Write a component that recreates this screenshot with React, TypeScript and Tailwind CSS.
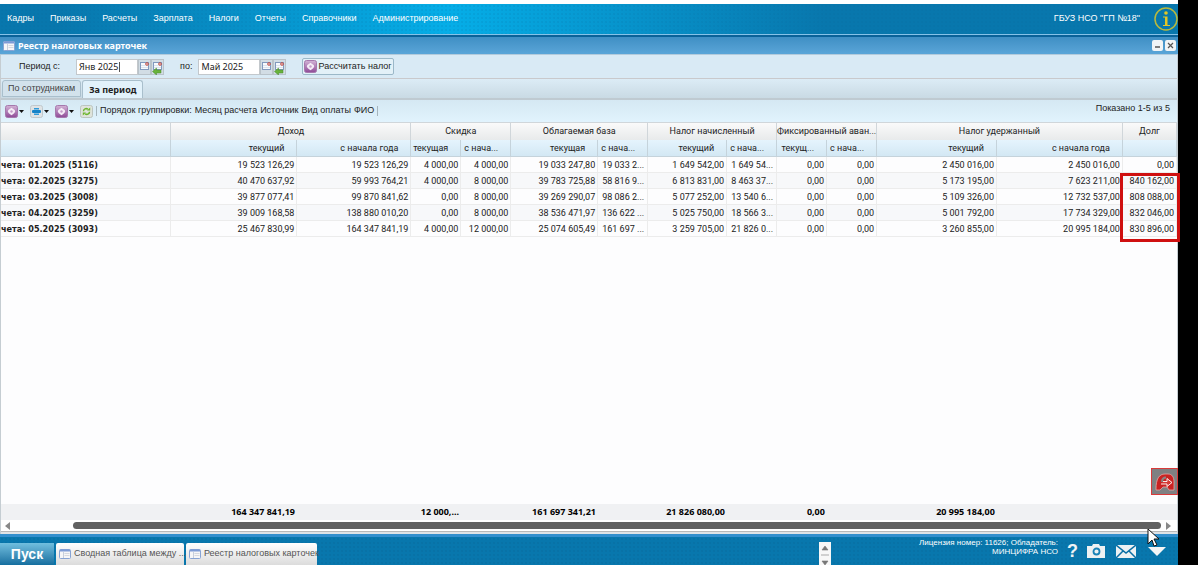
import { Fragment } from 'react';

const menu = ['Кадры', 'Приказы', 'Расчеты', 'Зарплата', 'Налоги', 'Отчеты', 'Справочники', 'Администрирование'];

const columns = [170, 126, 114, 50, 50, 87, 50, 79, 50, 50, 50, 120, 126, 54];

const groups = [
  { title: 'Доход', span: 2 },
  { title: 'Скидка', span: 2 },
  { title: 'Облагаемая база', span: 2 },
  { title: 'Налог начисленный', span: 2 },
  { title: 'Фиксированный аван...', span: 2 },
  { title: 'Налог удержанный', span: 2 },
  { title: 'Долг', span: 1 },
];

const subHeads = [
  'текущий', 'с начала года', 'текущая', 'с нача...', 'текущая', 'с нача...', 'текущий',
  'с нача...', 'текущ...', 'с нача...', 'текущий', 'с начала года', '',
];

const rows = [
  ['чета: 01.2025 (5116)', '19 523 126,29', '19 523 126,29', '4 000,00', '4 000,00', '19 033 247,80', '19 033 2...', '1 649 542,00', '1 649 54...', '0,00', '0,00', '2 450 016,00', '2 450 016,00', '0,00'],
  ['чета: 02.2025 (3275)', '40 470 637,92', '59 993 764,21', '4 000,00', '8 000,00', '39 783 725,88', '58 816 9...', '6 813 831,00', '8 463 37...', '0,00', '0,00', '5 173 195,00', '7 623 211,00', '840 162,00'],
  ['чета: 03.2025 (3008)', '39 877 077,41', '99 870 841,62', '0,00', '8 000,00', '39 269 290,07', '98 086 2...', '5 077 252,00', '13 540 6...', '0,00', '0,00', '5 109 326,00', '12 732 537,00', '808 088,00'],
  ['чета: 04.2025 (3259)', '39 009 168,58', '138 880 010,20', '0,00', '8 000,00', '38 536 471,97', '136 622 ...', '5 025 750,00', '18 566 3...', '0,00', '0,00', '5 001 792,00', '17 734 329,00', '832 046,00'],
  ['чета: 05.2025 (3093)', '25 467 830,99', '164 347 841,19', '4 000,00', '12 000,00', '25 074 605,49', '161 697 ...', '3 259 705,00', '21 826 0...', '0,00', '0,00', '3 260 855,00', '20 995 184,00', '830 896,00'],
];

const totals = ['', '164 347 841,19', '', '12 000,...', '', '161 697 341,21', '', '21 826 080,00', '', '0,00', '', '20 995 184,00', '', ''];

function Cols() {
  return (
    <colgroup>
      {columns.map((w, i) => (
        <col key={i} style={{ width: `${(w / 1176) * 100}%` }} />
      ))}
    </colgroup>
  );
}

function GearIcon() {
  return (
    <svg viewBox="0 0 13 13" className="size-[13px] shrink-0">
      <defs>
        <linearGradient id="gear" x2="0" y2="1">
          <stop offset="0" stopColor="#d3b4d6" />
          <stop offset="1" stopColor="#8e4a97" />
        </linearGradient>
      </defs>
      <rect x=".5" y=".5" width="12" height="12" rx="2" fill="url(#gear)" stroke="#a678ad" />
      <path d="m6.500 2.800 1.400 1 1.800 1.200.500 1.500-.800 1.500-1.500 1.200-1.400 1-1.400-1-1.500-1.200-.800-1.500.500-1.500 1.800-1.200z" fill="#f4ebf6" />
      <circle cx="6.500" cy="6.500" r="1.200" fill="#c49bca" />
    </svg>
  );
}

function PrintIcon() {
  return (
    <svg viewBox="0 0 13 13" className="size-[13px] shrink-0">
      <rect x=".5" y=".5" width="12" height="12" rx="2" fill="#dfe3e5" stroke="#c0c8cc" />
      <path d="M4 3h5v1.500H4zM4 8.500h5V10H4z" fill="#2f9ada" />
      <rect x="2" y="5" width="9" height="3" rx="1" fill="#1683c8" />
    </svg>
  );
}

function RefreshIcon() {
  return (
    <svg viewBox="0 0 13 13" className="size-[13px] shrink-0">
      <rect x=".5" y=".5" width="12" height="12" rx="2" fill="#dfe3dc" stroke="#bcc5bf" />
      <path d="M3.500 6.200C3.500 3.800 6 3 8 4.200M9.500 6.800C9.500 9.200 7 10 5 8.800" fill="none" stroke="#6db52e" strokeWidth="1.500" />
      <path d="M7 5.500h3.200V2.500zM6 7.500H2.800v3z" fill="#6db52e" />
    </svg>
  );
}

function CalendarIcon({ back }: { back?: boolean }) {
  return (
    <svg viewBox="0 0 13 16" className="h-4 w-[13px] shrink-0">
      <rect x=".5" y=".5" width="12" height="15" fill="#d2dde5" stroke="#b9c3ca" />
      <rect x="2.500" y="3.500" width="8" height="7" fill="#f7fafd" stroke="#8199bd" />
      <path d="M3 6.500h5M3 8.500h7" stroke="#dbe3ee" />
      <circle cx="9" cy="5" r="1.300" fill="#fff" stroke="#bd3f37" />
      {back && <path d="M1.500 12.500 5.500 9v2H10v3H5.500v2z" fill="#69b33c" stroke="#44882a" strokeWidth=".5" />}
    </svg>
  );
}

function WindowIcon() {
  return (
    <svg viewBox="0 0 12 10" className="h-[10px] w-3 shrink-0">
      <rect x=".5" y=".5" width="11" height="9" rx="1" fill="#f5f6f8" stroke="#86a3d4" />
      <path d="M1 1.500h10" stroke="#7c9bd6" strokeWidth="2" />
      <path d="M4.500 3v6" stroke="#c5cedc" />
      <path d="M5.500 4.500h5M5.500 6.500h5" stroke="#d5d8de" />
    </svg>
  );
}

function Caret() {
  return (
    <svg viewBox="0 0 5 3" className="h-[3px] w-[5px]">
      <path d="M0 0h5L2.500 3z" fill="#111" />
    </svg>
  );
}

function MonthField({ id, value, active }: { id: string; value: string; active?: boolean }) {
  return (
    <div className="relative flex items-center">
      <input
        id={id}
        defaultValue={value}
        className="h-4 w-[62px] border border-[#c3c8cc] bg-white px-[2px] font-['Noto_Sans',sans-serif] text-[9px] leading-[14px] text-[#222] outline-none"
      />
      {active && <span className="absolute top-[3px] left-[43px] h-[10px] w-px bg-[#555]" />}
      <button type="button" aria-label="Календарь"><CalendarIcon /></button>
      <button type="button" aria-label="Сбросить месяц"><CalendarIcon back /></button>
    </div>
  );
}

export default function App() {
  return (
    <div className="flex min-h-screen overflow-hidden bg-black font-['Liberation_Sans',Arial,sans-serif] text-[9px] text-[#222]">
      <div className="flex min-w-0 flex-1 flex-col bg-white pt-1">
        <header className="bg-linear-to-r from-[#0877ad] from-5% via-[#05aee8] via-38% to-[#0877ad] to-70%">
          <div className="flex h-[30px] items-center bg-[radial-gradient(#0a669820_1px,transparent_1px)] bg-[length:4px_4px] pl-[7px] text-white">
            <nav className="flex gap-4">
              {menu.map((item) => (
                <a key={item} href="#" className="whitespace-nowrap">{item}</a>
              ))}
            </nav>
            <span className="ml-auto">ГБУЗ НСО "ГП №18"</span>
            <svg viewBox="0 0 24 24" className="ml-[14px] size-6">
              <circle cx="12" cy="12" r="11" fill="none" stroke="#b9b93d" strokeWidth="1.500" />
              <circle cx="12" cy="6" r="1.800" fill="#e3c624" />
              <path d="M9 9.500h4.500V18H16v1H9v-1h2v-7.500H9z" fill="#e3c624" />
            </svg>
          </div>
        </header>
        <div className="h-[3px] border-t border-[#85c2e8] bg-[#0a6299]" />

        <div className="flex h-[18px] items-center border-b border-[#b3cbdc] bg-linear-to-b from-[#3f8fc4] to-[#5aa5d8] pr-[2px] pl-[3px]">
          <WindowIcon />
          <h1 className="ml-[3px] font-['Noto_Sans',sans-serif] font-bold text-white">Реестр налоговых карточек</h1>
          <div className="ml-auto flex gap-[2px]">
            <button type="button" aria-label="Свернуть" className="flex size-[11px] items-center justify-center rounded-[2px] bg-[#f1f4f6]">
              <svg viewBox="0 0 11 11" className="size-[11px]"><path d="M3 7h5" stroke="#555" strokeWidth="1.500" /></svg>
            </button>
            <button type="button" aria-label="Закрыть" className="flex size-[11px] items-center justify-center rounded-[2px] bg-[#f1f4f6]">
              <svg viewBox="0 0 11 11" className="size-[11px]"><path d="m3 3 5 5M8 3 3 8" stroke="#555" strokeWidth="1.200" /></svg>
            </button>
          </div>
        </div>

        <div className="flex min-h-0 flex-1 flex-col border-r border-l border-[#c5cdd2]">
          <div className="flex h-6 items-center border-b border-[#c9c9cc] bg-[#d9eaf5] pl-[18px]">
            <label htmlFor="from" className="mr-4">Период с:</label>
            <MonthField id="from" value="Янв 2025" active />
            <label htmlFor="to" className="mr-[6px] ml-4">по:</label>
            <MonthField id="to" value="Май 2025" />
            <button type="button" className="ml-4 flex h-[17px] items-center gap-px rounded-[2px] border border-[#9bb8c8] bg-[#e3f1f8] px-px whitespace-nowrap">
              <GearIcon />
              Рассчитать налог
            </button>
          </div>

          <div className="flex h-[21px] items-start gap-px border-b-2 border-[#bfcad1] bg-linear-to-b from-[#dcecf6] to-[#c9dae4] pt-px pl-px">
            <button type="button" className="h-[17px] rounded-t-[3px] border border-[#a9bfcc] bg-[#d2e2ec] px-[5px] text-[#444]">По сотрудникам</button>
            <button type="button" className="h-[18px] rounded-t-[3px] border border-b-0 border-[#a9bfcc] bg-[#e2f2fb] px-[6px] font-['Noto_Sans',sans-serif] font-bold">За период</button>
          </div>

          <div className="flex h-[22px] items-center bg-linear-to-b from-[#d5e8f3] to-[#e1f3fd] pr-[7px] pl-1">
            <div className="flex gap-[6px]">
              <button type="button" aria-label="Действия" className="flex items-center gap-px"><GearIcon /><Caret /></button>
              <button type="button" aria-label="Печать" className="flex items-center gap-px"><PrintIcon /><Caret /></button>
              <button type="button" aria-label="Операции" className="flex items-center gap-px"><GearIcon /><Caret /></button>
              <button type="button" aria-label="Обновить"><RefreshIcon /></button>
            </div>
            <div className="mx-[3px] h-[10px] w-px bg-[#a5b5bd]" />
            <span className="mr-[3px] whitespace-nowrap">Порядок группировки:</span>
            <div className="flex gap-[3px] whitespace-nowrap">
              <button type="button">Месяц расчета</button>
              <button type="button">Источник</button>
              <button type="button">Вид оплаты</button>
              <button type="button">ФИО</button>
            </div>
            <div className="ml-[3px] h-[10px] w-px bg-[#a5b5bd]" />
            <span className="ml-auto pb-1 whitespace-nowrap">Показано 1-5 из 5</span>
          </div>

          <main className="relative flex-1 bg-[#fdfdfe] font-['Roboto',sans-serif]">
            <table className="w-full table-fixed border-collapse leading-[14px]">
              <Cols />
              <thead>
                <tr className="h-[17px] bg-linear-to-b from-[#fafafa] to-[#e8eaeb]">
                  <th className="border-t border-r border-[#d0d6da]" />
                  {groups.map((g) => (
                    <th key={g.title} colSpan={g.span} className="border-t border-r border-[#d0d6da] p-0 font-normal whitespace-nowrap">{g.title}</th>
                  ))}
                </tr>
                <tr className="h-[17px] bg-linear-to-b from-[#e5f4fd] to-[#d2e7f3]">
                  <th className="border-r border-b border-[#c5d3db]" />
                  {subHeads.map((h, i) => (
                    <th key={i} className="border-r border-b border-[#c5d3db] p-0 pr-3 text-right font-normal whitespace-nowrap">{h}</th>
                  ))}
                </tr>
              </thead>
              <tbody>
                {rows.map((row) => (
                  <tr key={row[0]} className="h-4 border-b border-[#ececec] even:bg-[#f7f8fa]">
                    {row.map((cell, i) => (
                      <Fragment key={i}>
                        {i === 0 ? (
                          <th scope="row" className="border-r border-[#ececec] p-0 text-left font-['DejaVu_Sans_Condensed','DejaVu_Sans',sans-serif] font-bold whitespace-nowrap">{cell}</th>
                        ) : (
                          <td className={`border-r border-[#ececec] p-0 whitespace-nowrap ${cell.endsWith('...') ? 'pl-1 text-left' : 'pr-[2px] text-right'}`}>{cell}</td>
                        )}
                      </Fragment>
                    ))}
                  </tr>
                ))}
              </tbody>
            </table>
            <div className="absolute top-[51px] -right-[3px] h-[69px] w-[60px] border-3 border-[#cf1010]" />
            <div className="absolute -right-px bottom-[9px] flex size-[27px] items-center justify-center border border-[#d93a3a] bg-[#7f8082]">
              <svg viewBox="0 0 22 22" className="size-[22px]">
                <path d="M2 18C2 8 5 3 11 3h3c4 0 6 3 6 8v8h-5l-2-3H9l-3 3H2z" fill="#c92323" stroke="#e8a5a5" strokeWidth=".8" />
                <path d="M8 11c0-3 1-4.500 4-4.500" fill="none" stroke="#8a8585" strokeWidth="2" />
                <path d="M9 10.500h4V7.500l5 4-5 4V13H7" fill="#d63a36" stroke="#fff" strokeWidth=".9" />
              </svg>
            </div>
          </main>

          <table className="w-full table-fixed border-collapse bg-[#f0f1f3] font-['Noto_Sans',sans-serif] leading-[14px] font-bold text-black">
            <Cols />
            <tbody>
              <tr className="h-4">
                {totals.map((t, i) => (
                  <td key={i} className="p-0 pr-[2px] text-right whitespace-nowrap">{t}</td>
                ))}
              </tr>
            </tbody>
          </table>
          <div className="flex h-[11px] items-center bg-white px-1">
            <svg viewBox="0 0 5 8" className="h-2 w-[5px]"><path d="M5 0v8L0 4z" fill="#888" /></svg>
            <div className="mr-[5px] ml-[63px] h-[7px] flex-1 rounded-full bg-[#616161]" />
            <svg viewBox="0 0 5 8" className="mr-[2px] h-2 w-[5px]"><path d="M0 0v8l5-4z" fill="#888" /></svg>
          </div>
          <div className="h-[3px] border-t border-[#b8b8b8] bg-[#dfe3e6]" />
        </div>

        <footer className="bg-[#0877ad]">
          <div className="h-[3px] bg-[#338fcd]" />
          <div className="flex h-7 items-end bg-[radial-gradient(#0a669850_1px,transparent_1px)] bg-[length:4px_4px]">
            <button type="button" className="h-[22px] w-[54px] bg-linear-to-b from-[#70bfdf] to-[#136f9f] text-[14px] font-bold text-white">Пуск</button>
            <button type="button" className="ml-[2px] flex h-[22px] w-32 items-center gap-[3px] rounded-t-[2px] bg-linear-to-b from-white to-[#dcdcdc] px-[3px] whitespace-nowrap text-[#555]"><WindowIcon />Сводная таблица между ...</button>
            <button type="button" className="ml-[2px] flex h-[22px] w-[131px] items-center gap-[3px] rounded-t-[2px] bg-linear-to-b from-white to-[#dcdcdc] px-[3px] whitespace-nowrap text-[#555]"><WindowIcon />Реестр налоговых карточек</button>
            <div className="ml-auto flex h-[23px] w-3 justify-center bg-[#f7f7f7]">
              <svg viewBox="0 0 12 23" className="h-[23px] w-3"><path d="M3 8h6L6 4zM3 19h6l-3 4zM2 13h8" fill="#777" stroke="#777" strokeWidth=".6" /></svg>
            </div>
            <p className="ml-[88px] self-start pt-px text-right text-[8px] leading-[9px] text-white">Лицензия номер: 11626; Обладатель:<br />МИНЦИФРА НСО</p>
            <div className="mr-3 ml-[9px] flex h-7 items-center gap-2">
              <button type="button" aria-label="Справка" className="w-[11px] text-[18px] leading-5 font-bold text-[#eef3f5]">?</button>
              <svg viewBox="0 0 20 14" className="h-[14px] w-5"><path d="M1 2h5l1-2h6l1 2h5v12H1z" fill="#edf1f3" /><circle cx="10.500" cy="7.500" r="3" fill="none" stroke="#1982b7" strokeWidth="1.800" /></svg>
              <svg viewBox="0 0 20 13" className="ml-[2px] h-[13px] w-5"><path d="M0 0h20v13H0z" fill="#edf1f3" /><path d="m0 0 10 8 10-8M0 13l7-7M20 13l-7-7" fill="none" stroke="#0b6fa5" strokeWidth="1.500" /></svg>
              <svg viewBox="0 0 18 9" className="ml-1 h-[9px] w-[18px]"><path d="M0 0h18L9 9z" fill="#f2f5f6" /></svg>
            </div>
          </div>
        </footer>
      </div>
      <div className="w-5 shrink-0 bg-black" />
      <svg viewBox="0 0 12 19" className="absolute right-[39px] bottom-[18px] h-[19px] w-3">
        <path d="M1 1v15l4-4 2 6 3-1-3-6h5z" fill="#fff" stroke="#111" />
      </svg>
    </div>
  );
}
